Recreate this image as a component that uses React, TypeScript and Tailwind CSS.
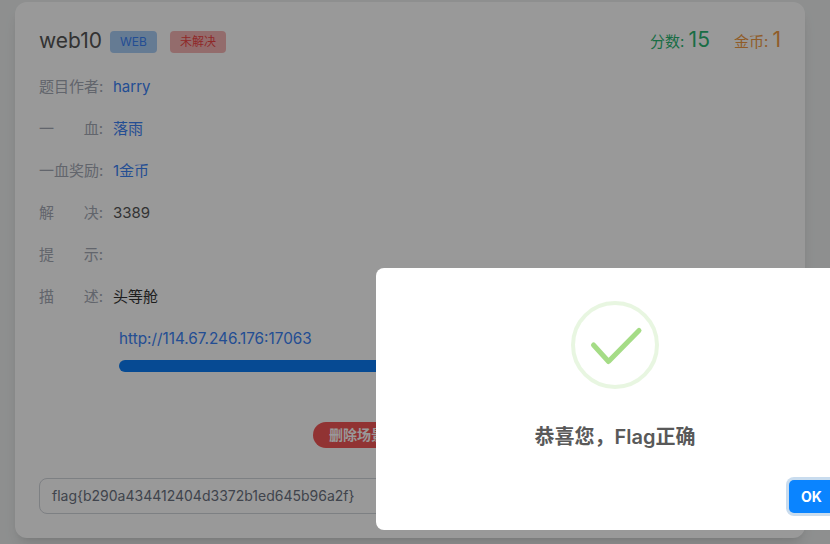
import React from "react";

const font = { fontFamily: "Inter, 'Noto Sans CJK SC', sans-serif" };

const Row = ({ label, value, cls }: { label: string[]; value: string; cls: string }) => (
  <div className="flex items-center h-[42px] text-[15px]">
    <div className="w-[64px] flex justify-between text-[#a3a8b4]">
      {label.map((c, i) => (
        <span key={i}>{c}</span>
      ))}
    </div>
    <span className={`ml-[10px] ${cls}`}>{value}</span>
  </div>
);

const App = () => {
  return (
    <div
      className="relative h-[544px] w-[830px] overflow-hidden bg-[#edefef] pl-[15px] pr-[25px] pt-[2px]"
      style={font}
    >
      <div className="h-[536px] rounded-xl bg-white px-6 pt-[22px] shadow-lg">
        <div className="flex items-start justify-between">
          <div className="flex items-center h-[32px]">
            <span className="text-[21px] text-[#555] leading-none">web10</span>
            <span className="ml-2 mt-[3px] h-[22px] w-[47px] rounded-[4px] bg-[#a9cdf5] text-center text-xs leading-[22px] text-[#3b82f6]">
              WEB
            </span>
            <span className="ml-[13px] mt-[3px] h-[22px] w-[56px] rounded-[4px] bg-[#f5b5b5] text-center text-xs leading-[22px] text-[#ef4444]">
              未解决
            </span>
          </div>
          <div className="flex items-center h-[32px] text-[15px]">
            <span className="text-[#2bb673]">
              分数: <span className="text-[21px]">15</span>
            </span>
            <span className="ml-6 text-[#f09a45]">
              金币: <span className="text-[21px]">1</span>
            </span>
          </div>
        </div>

        <div className="mt-[10px]">
          <Row label={["题", "目", "作", "者:"]} value="harry" cls="text-[#3b82f6]" />
          <Row label={["一", "血:"]} value="落雨" cls="text-[#3b82f6]" />
          <Row label={["一", "血", "奖", "励:"]} value="1金币" cls="text-[#3b82f6]" />
          <Row label={["解", "决:"]} value="3389" cls="text-[#555]" />
          <Row label={["提", "示:"]} value="" cls="" />
          <Row label={["描", "述:"]} value="头等舱" cls="text-[#333]" />
        </div>

        <div className="ml-20 mt-[11px] text-[15.3px] leading-5 text-[#3b82f6]">http://114.67.246.176:17063</div>
        <div className="ml-20 mt-[11px] h-3 w-[640px] rounded-full bg-[#0a7cf5]" />

        <div className="mt-[50px] flex justify-center">
          <button className="h-[26px] w-[194px] rounded-full bg-[#f25555] text-left pl-4 text-sm font-bold text-white">
            删除场景
          </button>
        </div>

        <div className="mt-[30px] h-9 w-[742px] rounded-lg border border-[#d1d5db] px-3 text-sm leading-[34px] text-[#6b7280]">
          {"flag{b290a434412404d3372b1ed645b96a2f}"}
        </div>
      </div>

      <div className="absolute inset-0 bg-black/40">
        <div className="absolute left-[376px] top-[268px] h-[262px] w-[478px] rounded-lg bg-white">
          <div className="flex justify-center pt-[33px]">
            <svg width="88" height="88" viewBox="0 0 88 88" fill="none">
              <circle cx="44" cy="44" r="42" stroke="#a5dc86" strokeOpacity="0.25" strokeWidth="4" />
              <path d="M22.5 44 L37.5 60.5 L68 29.5" stroke="#a5dc86" strokeWidth="5" strokeLinecap="round" strokeLinejoin="round" />
            </svg>
          </div>
          <div className="mt-[32px] text-center text-xl font-semibold leading-[32px] text-[#595959]">
            恭喜您，Flag正确
          </div>
          <div className="mt-[27px] flex justify-end pr-4">
            <button className="h-[33px] w-[49px] rounded-[5px] bg-[#0a84ff] text-left pl-3 text-sm font-bold text-white ring-[3px] ring-[#c9dcee]">
              OK
            </button>
          </div>
        </div>
      </div>
    </div>
  );
};

export default App;
